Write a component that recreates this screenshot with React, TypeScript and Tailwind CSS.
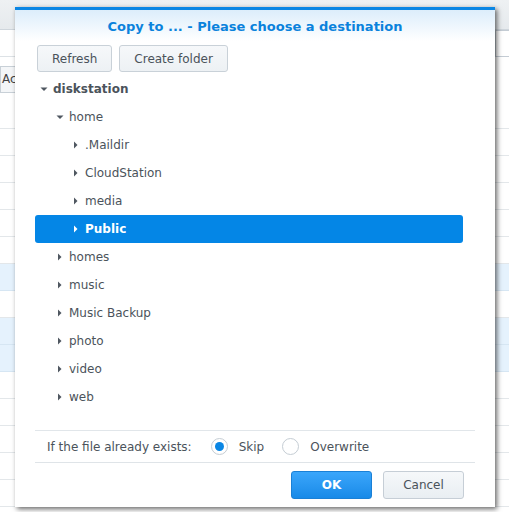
import React from "react";

type Node = { label: string; level: number; expanded?: boolean; bold?: boolean; selected?: boolean };

const nodes: Node[] = [
  { label: "diskstation", level: 0, expanded: true, bold: true },
  { label: "home", level: 1, expanded: true },
  { label: ".Maildir", level: 2 },
  { label: "CloudStation", level: 2 },
  { label: "media", level: 2 },
  { label: "Public", level: 2, selected: true },
  { label: "homes", level: 1 },
  { label: "music", level: 1 },
  { label: "Music Backup", level: 1 },
  { label: "photo", level: 1 },
  { label: "video", level: 1 },
  { label: "web", level: 1 },
];

const indent = ["pl-[5px]", "pl-[21px]", "pl-[37px]"];

function Arrow({ down, color }: { down?: boolean; color: string }) {
  return down ? (
    <svg width="8" height="8" viewBox="0 0 8 8" className="shrink-0">
      <path d="M0.5 2.5 L7.5 2.5 L4 6 Z" fill={color} />
    </svg>
  ) : (
    <svg width="8" height="8" viewBox="0 0 8 8" className="shrink-0">
      <path d="M2 0.5 L5.5 4 L2 7.5 Z" fill={color} />
    </svg>
  );
}

function BgRow({ blue }: { blue?: boolean }) {
  return <div className={`h-[27px] border-b ${blue ? "bg-[#e5f2fd] border-[#d6e6f3]" : "border-[#e3e7ea]"}`} />;
}

export default function App() {
  const bgRows = [0, 0, 0, 0, 0, 0, 1, 0, 1, 1, 0, 0, 0, 0, 0];
  return (
    <div className="relative w-[509px] h-[512px] overflow-hidden bg-white" style={{ fontFamily: '"DejaVu Sans", Verdana, sans-serif' }}>
      {/* background page */}
      <div className="h-[30px] bg-gradient-to-b from-[#eef1f3] to-[#e6eaed] border-b border-[#cfd6dc]" />
      <div className="h-[27px] border-b border-[#dde2e6] flex justify-end">
        <div className="w-[14px] h-[27px] border border-[#c4ccd4] border-r-0" />
      </div>
      <div className="h-[9px]" />
      <div className="h-[27px] w-[30px] border border-[#c8d0d7] bg-[#f4f6f8] text-[12px] text-[#444] leading-[25px] pl-[1px]">Ac</div>
      <div className="h-[9px]" />
      <div className="flex flex-col">
        {bgRows.map((b, i) => (
          <BgRow key={i} blue={!!b} />
        ))}
      </div>

      {/* dialog */}
      <div className="absolute left-[15px] top-[7px] w-[480px] h-[500px] bg-white border-t-[3px] border-[#0a86e4] shadow-[2px_2px_5px_rgba(0,0,0,0.6)] flex flex-col">
        <div className="h-[31px] pt-[2px] bg-gradient-to-b from-[#dcedfb] to-white flex items-center justify-center">
          <span className="text-[13px] font-bold text-[#0a82dc]">Copy to ... - Please choose a destination</span>
        </div>
        <div className="flex gap-[7px] pl-[22px] pt-[4px]">
          <button className="h-[27px] px-[14px] rounded-[3px] border border-[#c9d1d8] bg-gradient-to-b from-[#f6f8fa] to-[#edf1f4] text-[12px] text-[#4a525a]">Refresh</button>
          <button className="h-[27px] px-[14px] rounded-[3px] border border-[#c9d1d8] bg-gradient-to-b from-[#f6f8fa] to-[#edf1f4] text-[12px] text-[#4a525a]">Create folder</button>
        </div>
        <div className="flex flex-col pl-[20px] pr-[32px] pt-[3px]">
          {nodes.map((n, i) => (
            <div
              key={i}
              className={`h-[28px] flex items-center gap-[5px] ${indent[n.level]} ${n.selected ? "bg-[#0486e6] rounded-[3px] text-white font-bold" : "text-[#4b535b]"} ${n.bold ? "font-bold" : ""} text-[12px]`}
            >
              <Arrow down={n.expanded} color={n.selected ? "#ffffff" : "#4f5760"} />
              <span>{n.label}</span>
            </div>
          ))}
        </div>
        <div className="flex-1" />
        <div className="mx-[20px] border-t border-[#e1e6ea] h-[32px] flex items-center pl-[12px] text-[12px] text-[#4b535b]">
          <span>If the file already exists:</span>
          <span className="ml-[19px] w-[17px] h-[17px] rounded-full border border-[#c5cdd4] bg-white flex items-center justify-center">
            <span className="w-[9px] h-[9px] rounded-full bg-[#0a86e4]" />
          </span>
          <span className="ml-[11px]">Skip</span>
          <span className="ml-[18px] w-[17px] h-[17px] rounded-full border border-[#c5cdd4] bg-white" />
          <span className="ml-[11px]">Overwrite</span>
        </div>
        <div className="mx-[20px] border-t border-[#dfe4e8] flex justify-end gap-[11px] pr-[11px] pt-[8px] pb-[8px]">
          <button className="w-[81px] h-[28px] rounded-[3px] border border-[#1a80d6] bg-gradient-to-b from-[#3aa6fb] to-[#178ae8] text-white font-bold text-[12px]">OK</button>
          <button className="w-[81px] h-[28px] rounded-[3px] border border-[#c6ced6] bg-gradient-to-b from-[#f6f8fa] to-[#e9eef2] text-[#4a525a] text-[12px]">Cancel</button>
        </div>
      </div>
    </div>
  );
}
